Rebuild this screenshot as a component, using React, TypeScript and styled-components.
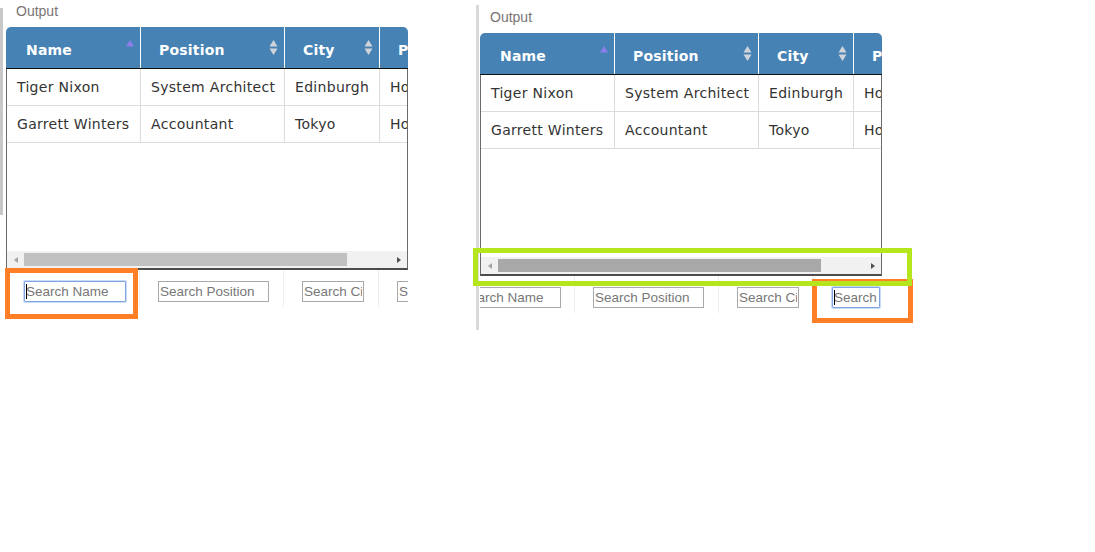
import React from "react";
import styled, { createGlobalStyle } from "styled-components";

const Global = createGlobalStyle`
  html, body { margin: 0; padding: 0; background: #ffffff; }
  body { width: 1095px; height: 552px; overflow: hidden; }
`;

type Col = {
  title: string;
  hw?: number;
  bw?: number;
  fw?: number;
  pad: number;
  sort?: "asc" | "both";
  input: number;
  ph: string;
};

const columns: Col[] = [
  { title: "Name", hw: 135, bw: 134, fw: 134, pad: 20, sort: "asc", input: 102, ph: "Search Name" },
  { title: "Position", hw: 144, bw: 144, fw: 144, pad: 18, sort: "both", input: 111, ph: "Search Position" },
  { title: "City", hw: 95, bw: 95, fw: 95, pad: 18, sort: "both", input: 62, ph: "Search City" },
  { title: "Phone", pad: 18, input: 48, ph: "Search Phone" },
];

const rows = [
  ["Tiger Nixon", "System Architect", "Edinburgh", "Home 5421"],
  ["Garrett Winters", "Accountant", "Tokyo", "Home 8422"],
];

const Page = styled.div`
  position: relative;
  display: flex;
  align-items: flex-start;
  width: 1095px;
  height: 552px;
`;

const Panel = styled.div<{ $top: number; $width?: number; $pad: number }>`
  display: flex;
  align-items: flex-start;
  margin-top: ${(p) => p.$top}px;
  padding-left: ${(p) => p.$pad}px;
  width: ${(p) => (p.$width ? `${p.$width - p.$pad}px` : "auto")};
`;

const Strip = styled.div<{ $top: number; $height: number; $color: string }>`
  width: 3px;
  margin-top: ${(p) => p.$top}px;
  height: ${(p) => p.$height}px;
  background: ${(p) => p.$color};
  flex: none;
`;

const Content = styled.div<{ $gap: number }>`
  margin-left: ${(p) => p.$gap}px;
  width: 402px;
  display: flex;
  flex-direction: column;
`;

const Label = styled.div`
  padding: 3px 0 0 10px;
  height: 16px;
  line-height: 16px;
  margin-bottom: 8px;
  font-family: "Liberation Sans", Arial, sans-serif;
  font-size: 14px;
  color: #7a7474;
`;

const Header = styled.div`
  display: flex;
  width: 402px;
  height: 41px;
  background: #4682b4;
  border-radius: 5px 5px 0 0;
  border-bottom: 1px solid #111;
  overflow: hidden;
  white-space: nowrap;
`;

const HeadCell = styled.div<{ $w?: number; $pad: number; $last?: boolean }>`
  box-sizing: border-box;
  flex: ${(p) => (p.$w ? `0 0 ${p.$w}px` : "1 0 auto")};
  display: flex;
  justify-content: space-between;
  align-items: flex-start;
  padding: 0 6px 0 ${(p) => p.$pad}px;
  border-right: ${(p) => (p.$last ? "none" : "1px solid #ffffff")};
`;

const HeadText = styled.span`
  padding-top: 15px;
  line-height: 17px;
  font-family: "DejaVu Sans", Verdana, sans-serif;
  font-weight: bold;
  font-size: 14px;
  letter-spacing: 0.2px;
  color: #ffffff;
`;

const SortIcon = styled.svg`
  margin-top: 13px;
  flex: none;
`;

const BodyBox = styled.div`
  width: 402px;
  box-sizing: border-box;
  border-left: 1px solid #6a6a6a;
  border-right: 1px solid #6a6a6a;
  border-bottom: 2px solid #4c4c4c;
`;

const RowsArea = styled.div`
  height: 182px;
  overflow: hidden;
  background: #ffffff;
`;

const Row = styled.div`
  display: flex;
  height: 36px;
  border-bottom: 1px solid #dcdcdc;
  white-space: nowrap;
`;

const Cell = styled.div<{ $w?: number; $last?: boolean }>`
  box-sizing: border-box;
  flex: ${(p) => (p.$w ? `0 0 ${p.$w}px` : "1 0 auto")};
  padding-left: 10px;
  line-height: 36px;
  font-family: "DejaVu Sans", Verdana, sans-serif;
  font-size: 14px;
  letter-spacing: 0.3px;
  color: #333333;
  border-right: ${(p) => (p.$last ? "none" : "1px solid #dcdcdc")};
`;

const ScrollTrack = styled.div`
  display: flex;
  align-items: center;
  height: 17px;
  background: #f1f1f1;
`;

const ScrollButton = styled.div`
  flex: 0 0 17px;
  height: 17px;
  display: flex;
  align-items: center;
  justify-content: center;
`;

const Arrow = styled.div<{ $dir: "left" | "right"; $color: string }>`
  width: 0;
  height: 0;
  border-top: 3.5px solid transparent;
  border-bottom: 3.5px solid transparent;
  ${(p) =>
    p.$dir === "left"
      ? `border-right: 4px solid ${p.$color};`
      : `border-left: 4px solid ${p.$color};`}
`;

const Thumb = styled.div<{ $color: string }>`
  width: 323px;
  height: 13px;
  background: ${(p) => p.$color};
`;

const Spacer = styled.div`
  flex: 1;
`;

const FooterClip = styled.div`
  width: 402px;
  overflow: hidden;
`;

const FooterRow = styled.div<{ $shift: number }>`
  display: flex;
  margin-left: ${(p) => -p.$shift}px;
  white-space: nowrap;
`;

const FootCell = styled.div<{ $w?: number; $last?: boolean }>`
  box-sizing: border-box;
  flex: ${(p) => (p.$w ? `0 0 ${p.$w}px` : "0 0 120px")};
  height: 37px;
  padding: 11px 0 0 18px;
  border-right: ${(p) => (p.$last ? "none" : "1px solid #eeeeee")};
`;

const InputWrap = styled.span`
  position: relative;
  display: inline-block;
`;

const Caret = styled.span`
  position: absolute;
  left: 2px;
  top: 3px;
  width: 1px;
  height: 15px;
  background: #000000;
`;

const SearchInput = styled.input<{ $w: number; $focus?: boolean }>`
  box-sizing: border-box;
  display: block;
  width: ${(p) => p.$w}px;
  height: 21px;
  margin: 0;
  padding: 0 1px;
  font-family: "Liberation Sans", Arial, sans-serif;
  font-size: 13.5px;
  color: #222;
  background: #ffffff;
  outline: none;
  border: 1px solid ${(p) => (p.$focus ? "#7fa6e2" : "#a9a9a9")};
  border-radius: ${(p) => (p.$focus ? "1px" : "0")};
  box-shadow: ${(p) => (p.$focus ? "0 0 0 1px #c9dbf5" : "none")};
  &::placeholder {
    color: #777777;
    opacity: 1;
  }
`;

const Annotation = styled.div<{ $x: number; $y: number; $w: number; $h: number; $color: string }>`
  position: absolute;
  left: ${(p) => p.$x}px;
  top: ${(p) => p.$y}px;
  width: ${(p) => p.$w}px;
  height: ${(p) => p.$h}px;
  box-sizing: border-box;
  border: 5px solid ${(p) => p.$color};
  pointer-events: none;
`;

function SortGlyph({ kind }: { kind: "asc" | "both" }) {
  if (kind === "asc") {
    return (
      <SortIcon width="8" height="7" viewBox="0 0 8 7">
        <polygon points="0,6.5 4,0 8,6.5" fill="#8a7fe8" />
      </SortIcon>
    );
  }
  return (
    <SortIcon width="9" height="16" viewBox="0 0 9 16">
      <polygon points="0.5,6.5 4.5,0 8.5,6.5" fill="#cfd4da" />
      <polygon points="0.5,8.5 8.5,8.5 4.5,15" fill="#cfd4da" />
    </SortIcon>
  );
}

function DataTable({
  focusIndex,
  shift,
  thumb,
}: {
  focusIndex: number;
  shift: number;
  thumb: string;
}) {
  return (
    <>
      <Header>
        {columns.map((c, i) => (
          <HeadCell key={c.title} $w={c.hw} $pad={c.pad} $last={i === columns.length - 1}>
            <HeadText>{c.title}</HeadText>
            {c.sort && <SortGlyph kind={c.sort} />}
          </HeadCell>
        ))}
      </Header>
      <BodyBox>
        <RowsArea>
          {rows.map((r) => (
            <Row key={r[0]}>
              {r.map((v, i) => (
                <Cell key={i} $w={columns[i].bw} $last={i === r.length - 1}>
                  {v}
                </Cell>
              ))}
            </Row>
          ))}
        </RowsArea>
        <ScrollTrack>
          <ScrollButton>
            <Arrow $dir="left" $color="#a3a3a3" />
          </ScrollButton>
          <Thumb $color={thumb} />
          <Spacer />
          <ScrollButton>
            <Arrow $dir="right" $color="#505050" />
          </ScrollButton>
        </ScrollTrack>
      </BodyBox>
      <FooterClip>
        <FooterRow $shift={shift}>
          {columns.map((c, i) => (
            <FootCell key={c.title} $w={c.fw} $last={i === columns.length - 1}>
              <InputWrap>
                <SearchInput
                  readOnly
                  tabIndex={-1}
                  $w={c.input}
                  $focus={i === focusIndex}
                  placeholder={c.ph}
                />
                {i === focusIndex && <Caret />}
              </InputWrap>
            </FootCell>
          ))}
        </FooterRow>
      </FooterClip>
    </>
  );
}

export default function App() {
  return (
    <>
      <Global />
      <Page>
        <Panel $top={0} $width={474} $pad={0}>
          <Strip $top={8} $height={207} $color="#c8c8c8" />
          <Content $gap={3}>
            <Label>Output</Label>
            <DataTable focusIndex={0} shift={0} thumb="#c1c1c1" />
          </Content>
        </Panel>
        <Panel $top={6} $pad={2}>
          <Strip $top={-1} $height={325} $color="#d9d9d9" />
          <Content $gap={1}>
            <Label>Output</Label>
            <DataTable focusIndex={3} shift={39} thumb="#a8a8a8" />
          </Content>
        </Panel>
        <Annotation $x={5} $y={268} $w={133} $h={51} $color="#ff7f27" />
        <Annotation $x={812} $y={279} $w={101} $h={44} $color="#ff7f27" />
        <Annotation $x={473} $y={248} $w={439} $h={38} $color="#b5e61d" />
      </Page>
    </>
  );
}
